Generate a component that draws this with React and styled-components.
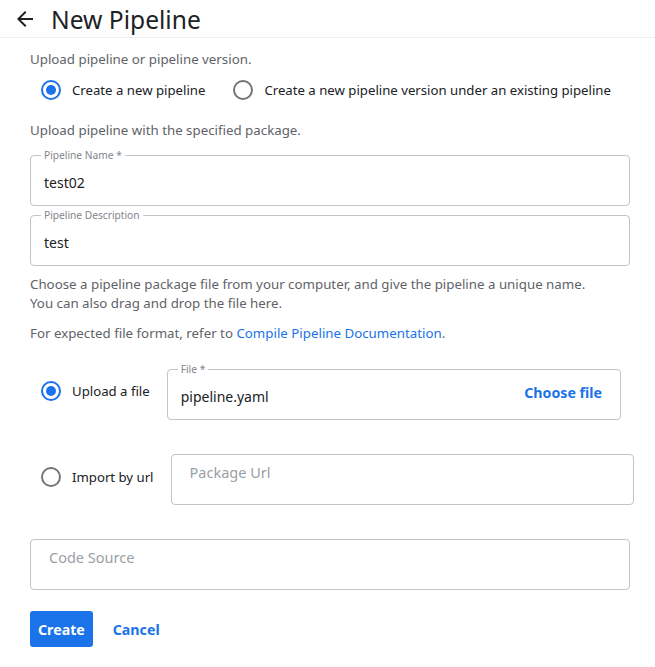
import React from "react";
import styled, { createGlobalStyle } from "styled-components";

const Global = createGlobalStyle`
  body {
    margin: 0;
    background: #fff;
    font-family: "Noto Sans", "Open Sans", sans-serif;
  }
`;

const Page = styled.div`
  width: 655px;
  height: 667px;
  overflow: hidden;
`;

const Header = styled.div`
  display: flex;
  align-items: center;
  height: 38px;
  padding-left: 13px;
  border-bottom: 1px solid #eeeeee;
  box-sizing: border-box;
`;

const Title = styled.h1`
  margin: 2px 0 0 14px;
  font-size: 24.6px;
  font-weight: 400;
  color: #202124;
`;

const Content = styled.div`
  padding: 0 25px 0 30px;
  display: flex;
  flex-direction: column;
`;

const Note = styled.div`
  font-size: 13.3px;
  line-height: 19px;
  color: #5f6368;
  margin-top: ${(p) => p.$top || 0}px;
`;

const Link = styled.span`
  color: #1a73e8;
`;

const RadioRow = styled.div`
  display: flex;
  align-items: center;
  margin-top: ${(p) => p.$top || 0}px;
`;

const RadioOption = styled.label`
  display: flex;
  align-items: center;
  gap: 11px;
  padding-left: 11px;
  margin-right: ${(p) => p.$gap || 0}px;
  margin-bottom: ${(p) => p.$lift || 0}px;
  font-size: 13.2px;
  color: #202124;
  white-space: nowrap;
`;

const Circle = styled.span`
  width: 20px;
  height: 20px;
  box-sizing: border-box;
  border-radius: 50%;
  border: 2px solid ${(p) => (p.$on ? "#1a73e8" : "#757575")};
  display: flex;
  align-items: center;
  justify-content: center;
  flex: none;
  &::after {
    content: "";
    width: 10px;
    height: 10px;
    border-radius: 50%;
    background: ${(p) => (p.$on ? "#1a73e8" : "transparent")};
  }
`;

const Field = styled.div`
  position: relative;
  height: 51px;
  box-sizing: border-box;
  border: 1px solid #c4c4c4;
  border-radius: 4px;
  display: flex;
  align-items: ${(p) => (p.$top ? "flex-start" : "center")};
  justify-content: space-between;
  padding: ${(p) => (p.$top ? "7px 18px 0" : "3px 18px 0 13px")};
  margin-top: ${(p) => p.$mt || 0}px;
  margin-left: ${(p) => p.$ml || 0}px;
  margin-right: ${(p) => p.$mr || 0}px;
  flex: ${(p) => (p.$grow ? 1 : "none")};
`;

const FloatLabel = styled.span`
  position: absolute;
  top: -8px;
  left: 10px;
  padding: 0 3px;
  background: #fff;
  font-size: 10.2px;
  line-height: 14px;
  color: #80868b;
`;

const Value = styled.span`
  font-size: 14px;
  color: #202124;
`;

const Placeholder = styled.span`
  font-size: 14.5px;
  color: #9aa0a6;
`;

const TextButton = styled.button`
  border: none;
  background: none;
  padding: 0;
  margin-bottom: ${(p) => p.$lift || 0}px;
  font: inherit;
  font-size: 14.2px;
  font-weight: 700;
  color: #1a73e8;
  cursor: pointer;
`;

const Actions = styled.div`
  display: flex;
  align-items: center;
  gap: 20px;
  margin-top: 21px;
`;

const PrimaryButton = styled.button`
  height: 36px;
  padding: 0 8px;
  border: none;
  border-radius: 3px;
  background: #1a73e8;
  color: #fff;
  font: inherit;
  font-size: 14.2px;
  font-weight: 700;
`;

const BackIcon = () => (
  <svg width="24" height="24" viewBox="0 0 24 24">
    <path d="M20 11H7.83l5.59-5.59L12 4l-8 8 8 8 1.41-1.41L7.83 13H20v-2z" fill="#202124" />
  </svg>
);

const Radio = ({ on, children, gap, lift }) => (
  <RadioOption $gap={gap} $lift={lift}>
    <Circle $on={on} />
    {children}
  </RadioOption>
);

export default function App() {
  return (
    <Page>
      <Global />
      <Header>
        <BackIcon />
        <Title>New Pipeline</Title>
      </Header>
      <Content>
        <Note $top={12}>Upload pipeline or pipeline version.</Note>
        <RadioRow $top={11}>
          <Radio on gap={17}>Create a new pipeline</Radio>
          <Radio>Create a new pipeline version under an existing pipeline</Radio>
        </RadioRow>
        <Note $top={21}>Upload pipeline with the specified package.</Note>
        <Field $mt={15}>
          <FloatLabel>Pipeline Name *</FloatLabel>
          <Value>test02</Value>
        </Field>
        <Field $mt={9}>
          <FloatLabel>Pipeline Description</FloatLabel>
          <Value>test</Value>
        </Field>
        <Note $top={9}>
          Choose a pipeline package file from your computer, and give the pipeline a unique name.
          <br />
          You can also drag and drop the file here.
        </Note>
        <Note $top={11}>
          For expected file format, refer to <Link>Compile Pipeline Documentation</Link>.
        </Note>
        <RadioRow $top={26}>
          <Radio on lift={7}>Upload a file</Radio>
          <Field $grow $ml={17} $mr={9}>
            <FloatLabel>File *</FloatLabel>
            <Value>pipeline.yaml</Value>
            <TextButton $lift={7}>Choose file</TextButton>
          </Field>
        </RadioRow>
        <RadioRow $top={34}>
          <Radio lift={6}>Import by url</Radio>
          <Field $grow $top $ml={17} $mr={-4}>
            <Placeholder>Package Url</Placeholder>
          </Field>
        </RadioRow>
        <Field $top $mt={34}>
          <Placeholder>Code Source</Placeholder>
        </Field>
        <Actions>
          <PrimaryButton>Create</PrimaryButton>
          <TextButton>Cancel</TextButton>
        </Actions>
      </Content>
    </Page>
  );
}
